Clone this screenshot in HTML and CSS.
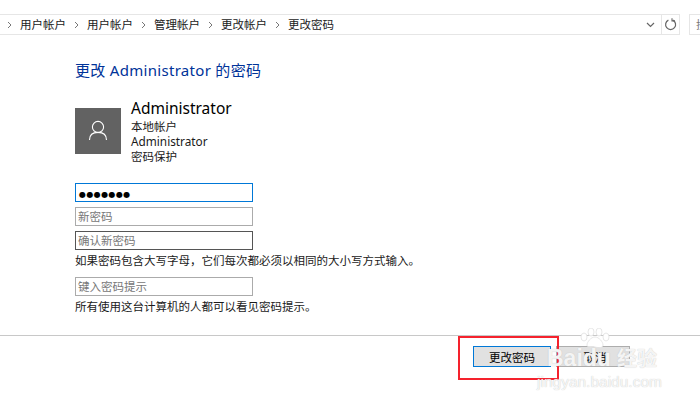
FILE: index.html
```html
<!DOCTYPE html>
<html lang="zh">
<head>
<meta charset="utf-8">
<title>更改密码</title>
<link rel="stylesheet" href="styles.css">
</head>
<body>
<div class="page">
  <header class="toolbar">
    <nav class="address">
      <div class="crumbs">
        <svg class="sep" width="13" height="8" viewBox="0 0 13 8"><path d="M1 1l3 3-3 3" fill="none" stroke="#777" stroke-width="1"/></svg><span>用户帐户</span>
        <svg class="sep" width="13" height="8" viewBox="0 0 13 8"><path d="M1 1l3 3-3 3" fill="none" stroke="#777" stroke-width="1"/></svg><span>用户帐户</span>
        <svg class="sep" width="13" height="8" viewBox="0 0 13 8"><path d="M1 1l3 3-3 3" fill="none" stroke="#777" stroke-width="1"/></svg><span>管理帐户</span>
        <svg class="sep" width="13" height="8" viewBox="0 0 13 8"><path d="M1 1l3 3-3 3" fill="none" stroke="#777" stroke-width="1"/></svg><span>更改帐户</span>
        <svg class="sep" width="13" height="8" viewBox="0 0 13 8"><path d="M1 1l3 3-3 3" fill="none" stroke="#777" stroke-width="1"/></svg><span>更改密码</span>
      </div>
      <svg class="chev" width="9" height="6" viewBox="0 0 9 6"><path d="M1 1l3.5 3.5L8 1" fill="none" stroke="#666" stroke-width="1.2"/></svg>
      <div class="refresh">
        <svg width="13" height="13" viewBox="0 0 13 13"><path d="M4.4 2.1A5 5 0 1 0 8.8 2.1" fill="none" stroke="#666" stroke-width="1.2"/><path d="M8 0.3v2.6h3" fill="none" stroke="#666" stroke-width="1.1"/></svg>
      </div>
    </nav>
    <div class="search"><span>搜</span></div>
  </header>

  <main class="content">
    <h1 class="title">更改 Administrator 的密码</h1>
    <section class="account">
      <div class="avatar">
        <svg width="20" height="22" viewBox="0 0 20 22"><circle cx="10" cy="7" r="5.6" fill="none" stroke="#fff" stroke-width="1.1"/><path d="M1.5 20c0-5 3.6-7.6 8.5-7.6s8.5 2.6 8.5 7.6" fill="none" stroke="#fff" stroke-width="1.1"/></svg>
      </div>
      <div class="info">
        <div class="name">Administrator</div>
        <div>本地帐户</div>
        <div class="login">Administrator</div>
        <div>密码保护</div>
      </div>
    </section>
    <form class="form">
      <div class="field focus"><span class="dots">●●●●●●●</span></div>
      <div class="field"><span>新密码</span></div>
      <div class="field dark"><span>确认新密码</span></div>
      <p class="note">如果密码包含大写字母，它们每次都必须以相同的大小写方式输入。</p>
      <div class="field hint"><span>键入密码提示</span></div>
      <p class="note">所有使用这台计算机的人都可以看见密码提示。</p>
    </form>
  </main>

  <footer class="footer">
    <button class="btn primary" type="button">更改密码</button>
    <button class="btn" type="button">取消</button>
  </footer>

  <div class="redbox"></div>
  <div class="watermark">
    <svg class="paw" width="30" height="20" viewBox="0 0 30 20"><g fill="#fff" stroke="#ddd" stroke-width="0.7"><ellipse cx="4" cy="9" rx="3" ry="4"/><ellipse cx="11" cy="4" rx="3" ry="4"/><ellipse cx="19" cy="4" rx="3" ry="4"/><ellipse cx="26" cy="9" rx="3" ry="4"/><path d="M15 9c4 0 8 5 8 8s-4 3-8 2-8 1-8-2 4-8 8-8z"/></g></svg>
    <div class="wm-top"><span>Bai</span><span class="wm-du">du</span><span class="wm-cn">经验</span></div>
    <div class="wm-sub">jingyan.baidu.com</div>
  </div>
</div>
</body>
</html>
```

FILE: styles.css
```css
* { box-sizing: border-box; }
html, body { margin: 0; padding: 0; background: #fff; }
body {
  font-family: "Noto Sans", "Noto Sans CJK SC", sans-serif;
  color: #1a1a1a;
  font-size: 11.5px;
}
.page {
  position: relative;
  width: 700px;
  height: 404px;
  overflow: hidden;
  display: flex;
  flex-direction: column;
}
.toolbar {
  display: flex;
  gap: 9px;
  margin-top: 14px;
  height: 21px;
  flex: none;
}
.address {
  width: 680px;
  display: flex;
  align-items: center;
  border: 1px solid #e6e6e6;
  border-left: 0;
}
.crumbs {
  flex: 1;
  display: flex;
  align-items: center;
  padding-left: 7px;
  color: #222;
  line-height: 19px;
}
.crumbs span { white-space: nowrap; }
.sep {
  flex: none;
  margin-left: 8px;
}
.sep:first-child { margin-left: 0; }
.chev { margin-right: 6px; }
.refresh {
  width: 18px;
  height: 100%;
  border-left: 1px solid #e6e6e6;
  display: flex;
  align-items: center;
  justify-content: center;
}
.search {
  flex: 1;
  border: 1px solid #e6e6e6;
  border-right: 0;
  padding-left: 6px;
  color: #777;
  line-height: 19px;
  overflow: hidden;
}
.content {
  flex: 1;
  padding: 25px 0 0 75px;
}
.title {
  margin: 0;
  font-size: 15px;
  font-weight: 400;
  line-height: 20px;
  letter-spacing: 0.3px;
  color: #003399;
}
.account {
  display: flex;
  gap: 10px;
  margin-top: 18px;
}
.avatar {
  width: 46px;
  height: 46px;
  margin-top: 10px;
  background: #626262;
  display: flex;
  align-items: center;
  justify-content: center;
}
.info {
  line-height: 15px;
}
.name {
  font-size: 15.5px;
  line-height: 20px;
  margin-bottom: 1px;
  color: #000;
}
.login { font-size: 11.8px; }
.form { margin-top: 19px; }
.field {
  width: 178px;
  height: 19px;
  border: 1px solid #ababab;
  margin-bottom: 5px;
  padding-left: 2px;
  line-height: 17px;
  color: #777;
}
.field.focus { border-color: #0078d7; padding-left: 3px; }
.field.dark { border-color: #555; margin-bottom: 0; }
.field.hint { margin-top: 8px; margin-bottom: 0; }
.dots {
  color: #000;
  font-family: "DejaVu Sans", sans-serif;
  font-size: 8px;
  letter-spacing: 0.4px;
}
.note {
  margin: 3px 0 0;
  line-height: 16px;
  color: #1a1a1a;
}
.footer {
  flex: none;
  height: 69px;
  border-top: 1px solid #c8c8c8;
  display: flex;
  gap: 5px;
  padding: 10px 0 0 473px;
  align-items: flex-start;
}
.btn {
  width: 78px;
  height: 21px;
  padding: 0;
  border: 1px solid #adadad;
  background: #e1e1e1;
  font: inherit;
  color: #000;
}
.btn.primary { border-color: #0078d7; }
.btn + .btn { width: 74px; padding-left: 4px; }
.redbox {
  position: absolute;
  left: 458px;
  top: 336px;
  width: 101px;
  height: 44px;
  border: 2px solid #f5222d;
}
.watermark {
  position: absolute;
  left: 537px;
  top: 328px;
  width: 163px;
  height: 60px;
  color: rgba(255, 255, 255, 0.85);
  text-shadow: 0 0 1px #bbb;
  pointer-events: none;
}
.paw {
  position: absolute;
  left: 43px;
  top: 0;
}
.wm-top {
  display: flex;
  align-items: baseline;
  padding: 17px 0 0 10px;
  font-family: "Liberation Sans", "Noto Sans CJK SC", sans-serif;
  font-size: 23px;
  font-weight: 700;
  line-height: 26px;
  white-space: nowrap;
}
.wm-cn {
  margin-left: 6px;
  font-family: "Noto Sans CJK SC", sans-serif;
  font-size: 20px;
}
.wm-sub {
  font-family: "Liberation Sans", sans-serif;
  font-size: 15.5px;
  line-height: 16px;
  margin-top: 3px;
  white-space: nowrap;
}
```
